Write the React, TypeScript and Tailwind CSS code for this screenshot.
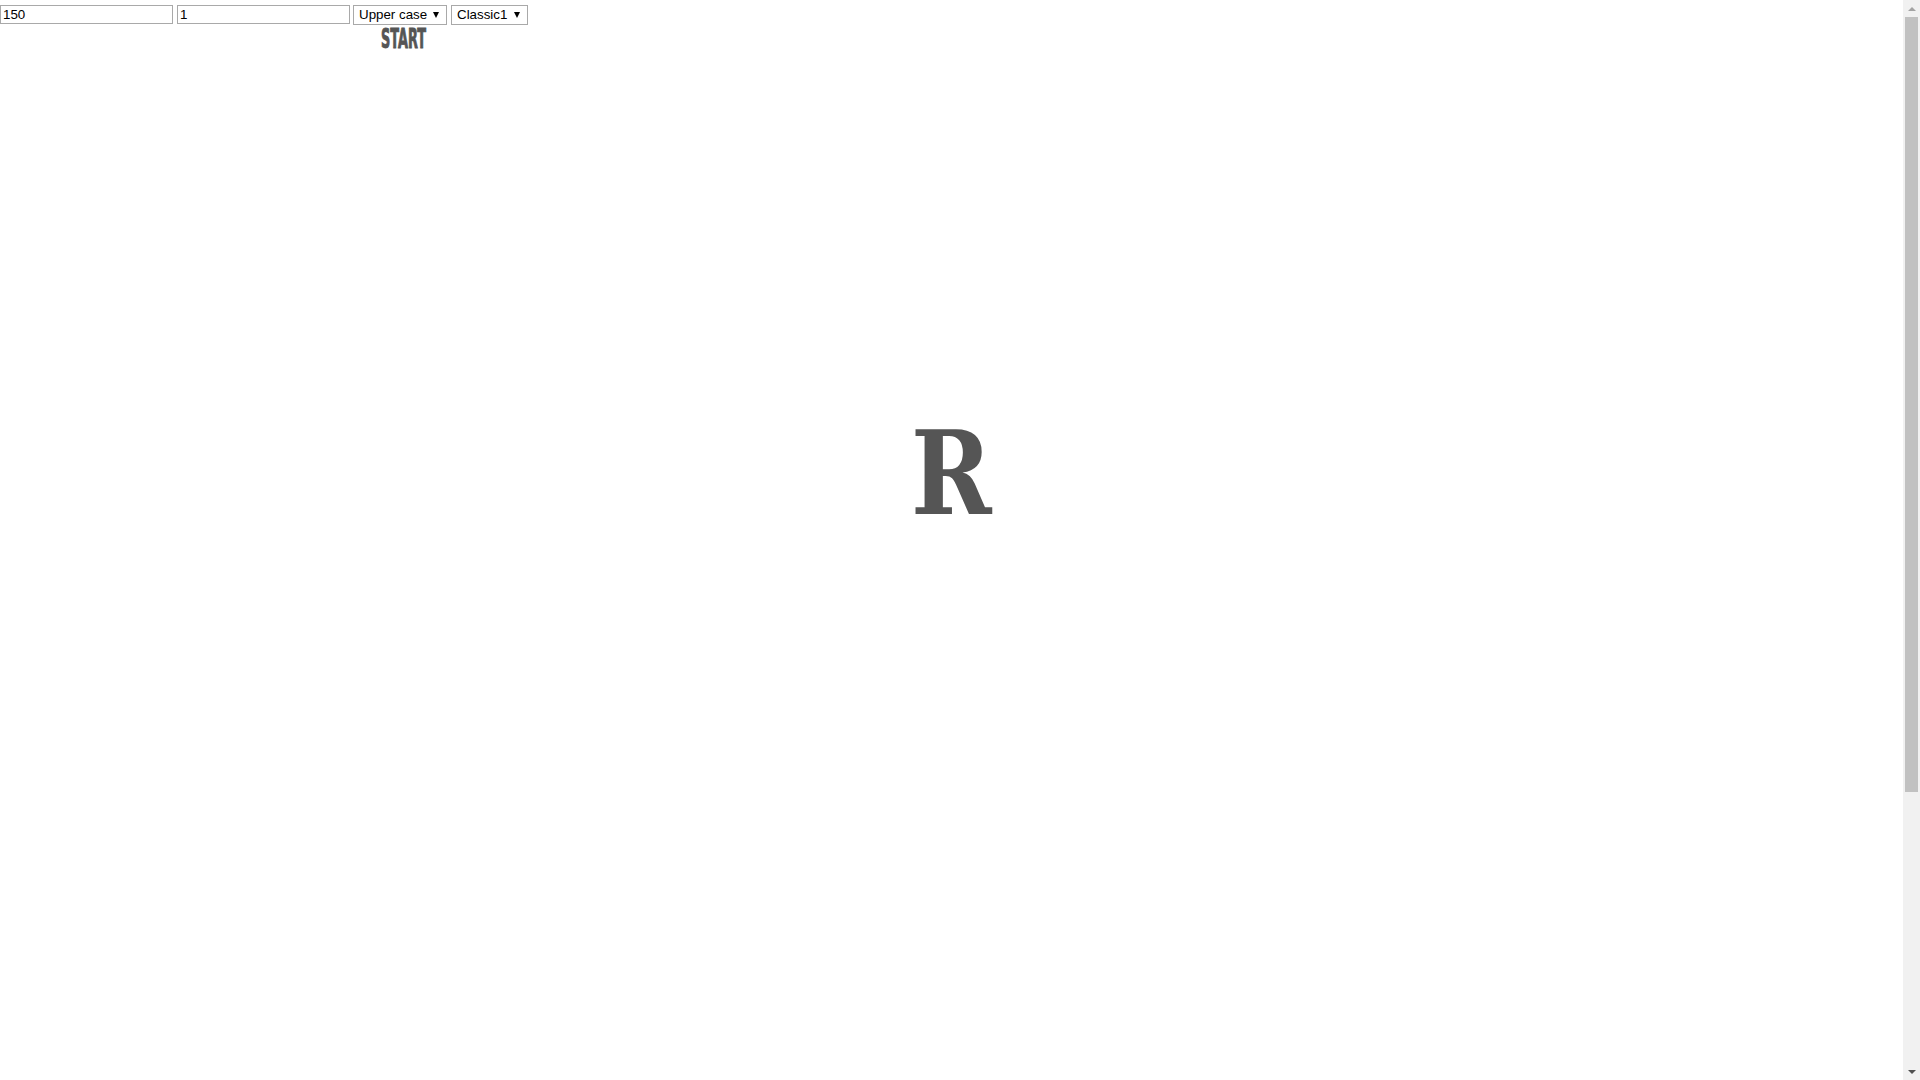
import { useState } from "react";

const fieldFont = { fontFamily: '"Liberation Sans", Arial, sans-serif' };

function SelectBox({ label, width }: { label: string; width: string }) {
  return (
    <button
      className={`${width} h-[20px] flex items-center justify-between bg-white border border-[#a9a9a9] pl-[5px] pr-[7px] text-[13.33px] leading-[16px] text-black`}
      style={fieldFont}
    >
      <span>{label}</span>
      <span className="w-0 h-0 border-l-[3.5px] border-r-[3.5px] border-t-[6px] border-l-transparent border-r-transparent border-t-black" />
    </button>
  );
}

function Scrollbar() {
  return (
    <div className="w-[17px] h-full flex flex-col bg-[#f1f1f1]">
      <div className="h-[17px] flex items-center justify-center">
        <span className="w-0 h-0 border-l-[4px] border-r-[4px] border-b-[4px] border-l-transparent border-r-transparent border-b-[#a3a3a3]" />
      </div>
      <div className="flex-1 px-[2px]">
        <div className="h-[775px] bg-[#c1c1c1]" />
      </div>
      <div className="h-[17px] flex items-center justify-center">
        <span className="w-0 h-0 border-l-[4px] border-r-[4px] border-t-[4px] border-l-transparent border-r-transparent border-t-[#505050]" />
      </div>
    </div>
  );
}

export default function App() {
  const [speed, setSpeed] = useState("150");
  const [count, setCount] = useState("1");

  return (
    <div className="flex h-screen overflow-hidden bg-white">
      <main className="flex-1 min-w-0">
        {/* Controls row */}
        <div className="flex items-start gap-[4px] pt-[5px]">
          <input
            value={speed}
            onChange={(e) => setSpeed(e.target.value)}
            className="w-[173px] h-[19px] border border-[#a9a9a9] px-[2px] text-[13.33px] leading-[17px] text-black outline-none"
            style={fieldFont}
          />
          <input
            value={count}
            onChange={(e) => setCount(e.target.value)}
            className="w-[173px] h-[19px] border border-[#a9a9a9] px-[2px] text-[13.33px] leading-[17px] text-black outline-none"
            style={fieldFont}
          />
          <div className="flex gap-[4px] -ml-[1px]">
            <SelectBox label="Upper case" width="w-[94px]" />
            <SelectBox label="Classic1" width="w-[77px]" />
          </div>
        </div>

        {/* Start button */}
        <div className="pl-[381px] pt-[1px]">
          <button
            className="block h-[26px] origin-left scale-x-[0.55] text-[26px] leading-[26px] font-bold text-[#555555] [-webkit-text-stroke:0.9px_#555555]"
            style={{ fontFamily: '"DejaVu Sans Condensed", "DejaVu Sans", sans-serif' }}
          >
            START
          </button>
        </div>

        {/* Letter display */}
        <div className="flex justify-center pt-[363px]">
          <span
            className="inline-block scale-x-[0.93] text-[116px] leading-[117px] font-bold text-[#555555]"
            style={{ fontFamily: '"DejaVu Serif Condensed", "DejaVu Serif", serif' }}
          >
            R
          </span>
        </div>
      </main>
      <Scrollbar />
    </div>
  );
}
